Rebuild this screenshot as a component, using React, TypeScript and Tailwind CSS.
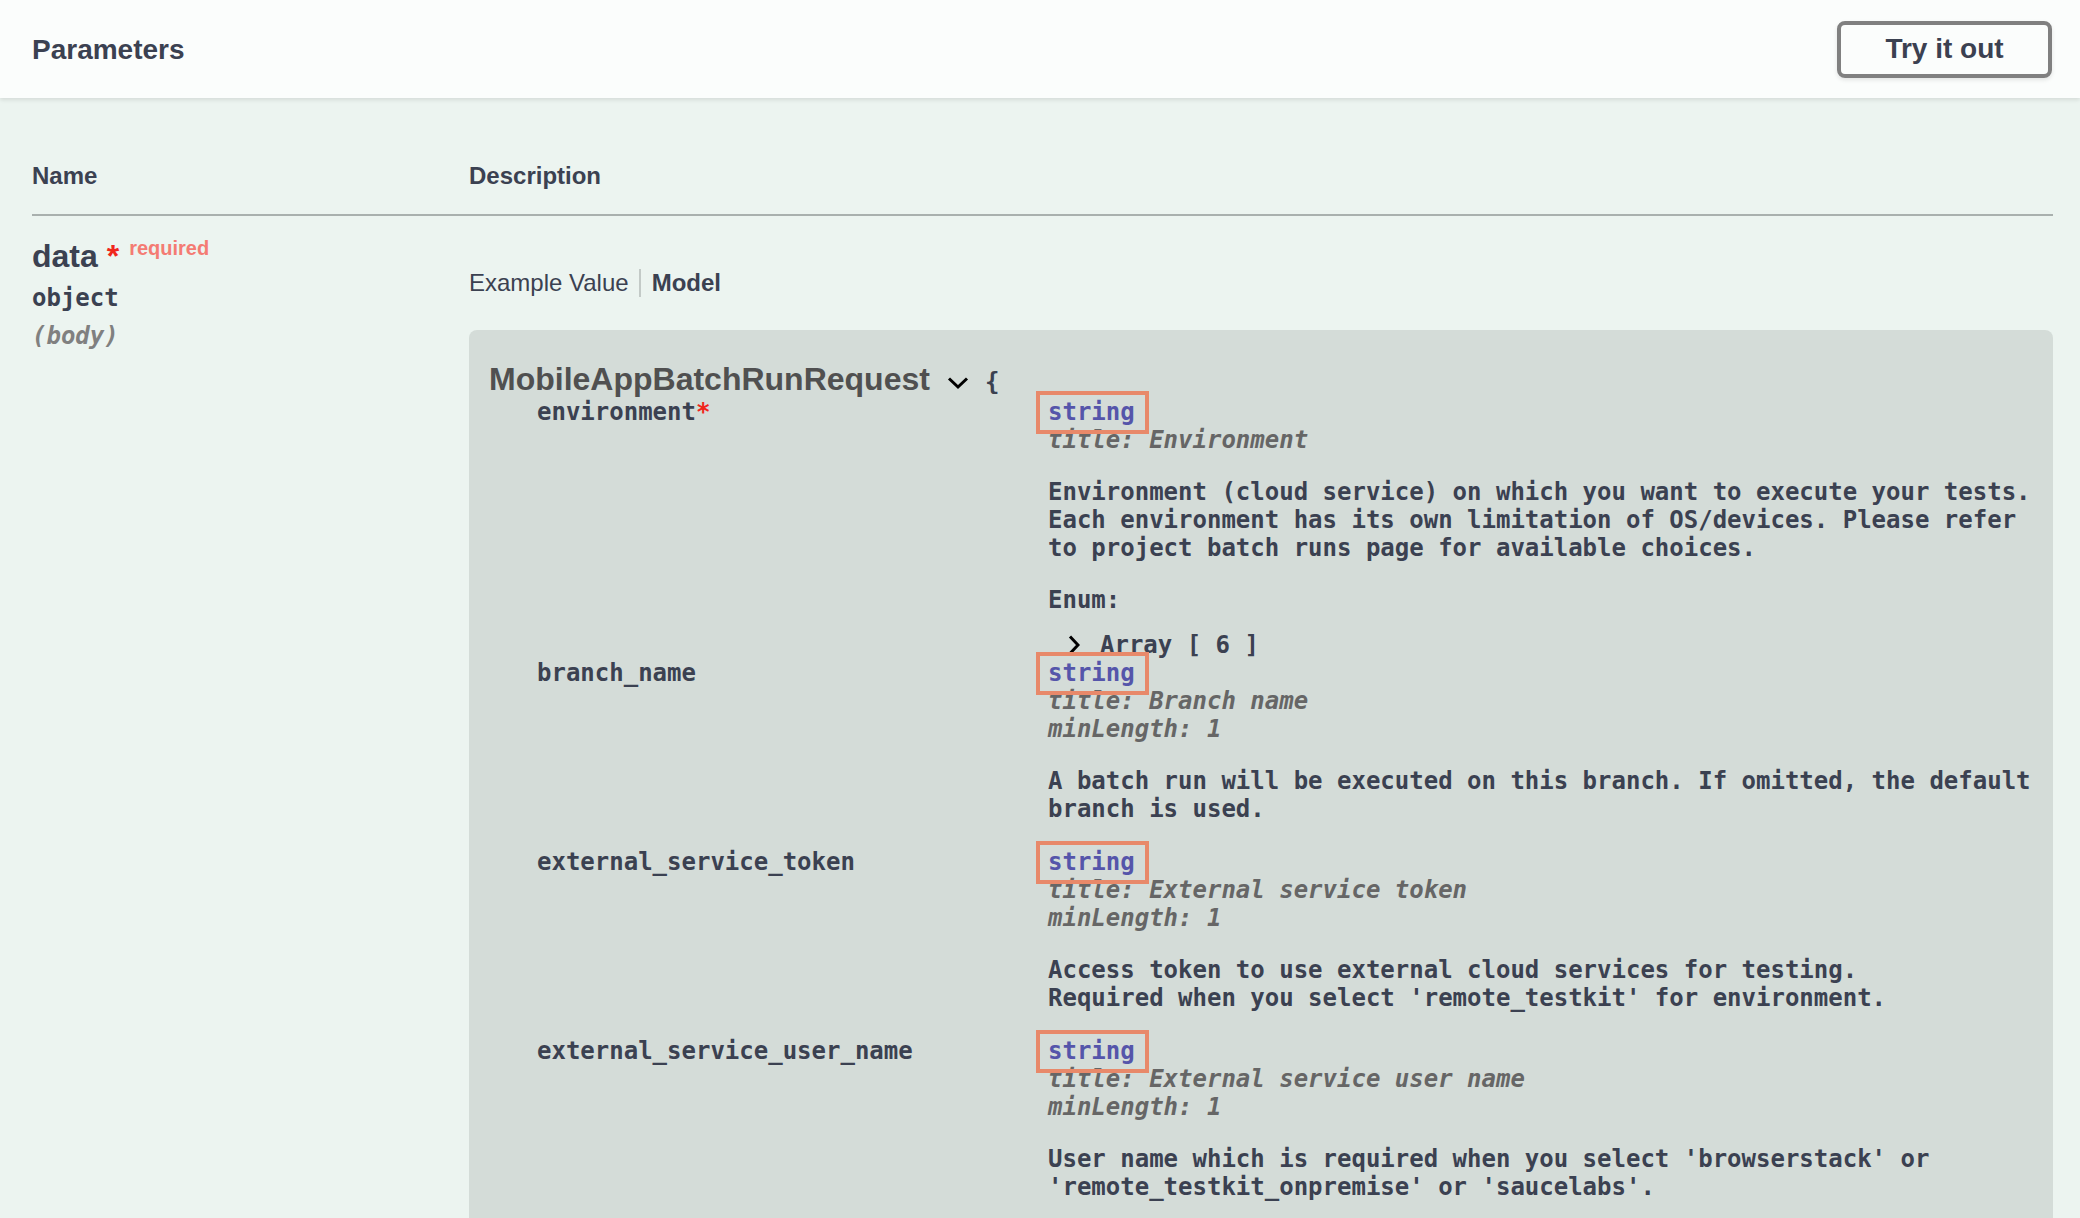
import React from "react";

const mono = "font-['DejaVu_Sans_Mono',monospace] font-bold";

function TypeTag({ children }: { children: React.ReactNode }) {
  return (
    <div className="h-[28px] leading-[28px]">
      <span className="relative inline-block text-[#55a]">
        {children}
        <span className="absolute left-[-12px] right-[-14px] top-[-7px] bottom-[-8px] border-4 border-[#e8896a]" />
      </span>
    </div>
  );
}

function Line({ children, className = "" }: { children: React.ReactNode; className?: string }) {
  return <div className={`h-[28px] leading-[28px] whitespace-pre ${className}`}>{children}</div>;
}

function Row({
  name,
  required,
  children,
}: {
  name: string;
  required?: boolean;
  children: React.ReactNode;
}) {
  return (
    <div className="flex">
      <div className="w-[559px] shrink-0 pl-[48px] h-[28px] leading-[28px] text-[#3b4151]">
        {name}
        {required && <span className="text-[#f0261c]">*</span>}
      </div>
      <div className="flex-1 text-[#3b4151]">{children}</div>
    </div>
  );
}

export default function App() {
  return (
    <div className="w-[2080px] h-[1218px] overflow-hidden bg-[#ecf4f0] font-['Liberation_Sans',Arial,sans-serif] text-[#3b4151]">
      <header className="relative z-10 h-[98px] bg-[#fbfdfc] shadow-[0_2px_4px_rgba(0,0,0,0.1)] flex items-center justify-between pl-[32px] pr-[28px]">
        <h4 className="text-[28px] font-bold leading-[34px] pt-[2px]">Parameters</h4>
        <button className="w-[215px] h-[57px] border-4 border-[#808080] rounded-[8px] bg-transparent text-[28px] font-bold text-[#3b4151] shadow-[0_2px_4px_rgba(0,0,0,0.1)] font-['Liberation_Sans',Arial,sans-serif]">
          Try it out
        </button>
      </header>

      <div className="pt-[64px] pl-[32px] pr-[27px]">
        <div className="flex h-[28px] leading-[28px] text-[24px] font-bold">
          <div className="w-[437px]">Name</div>
          <div>Description</div>
        </div>
        <div className="mt-[24px] h-[2px] bg-[#a9b0ae]" />

        <div className="flex">
          <div className="w-[437px] shrink-0 pt-[20px]">
            <div className="h-[40px] leading-[40px] text-[32px] font-bold whitespace-nowrap">
              data{"\u00a0"}
              <span className="text-[#f0261c]">*</span>
              <span className="relative top-[-12px] px-[10px] text-[20px] font-bold text-[#f47b73]">required</span>
            </div>
            <div className={`mt-[8px] h-[28px] leading-[28px] text-[24px] ${mono}`}>object</div>
            <div className={`mt-[10px] h-[28px] leading-[28px] text-[24px] italic text-[#808080] ${mono}`}>(body)</div>
          </div>

          <div className="flex-1 pt-[53px]">
            <div className="flex h-[28px] leading-[28px] text-[24px]">
              <div className="pr-[10px] border-r-2 border-[#c3cac7]">Example Value</div>
              <div className="pl-[11px] font-bold">Model</div>
            </div>

            <div className="mt-[33px] h-[1000px] rounded-[8px] bg-[#d4dcd8] pl-[20px] pt-[32px]">
              <div className="flex items-baseline h-[34px] leading-[34px]">
                <span className="text-[32px] font-bold text-[#505050]">MobileAppBatchRunRequest</span>
                <svg className="ml-[17px]" width="22" height="14" viewBox="0 0 22 14">
                  <path d="M2 2.5 L11 11 L20 2.5" fill="none" stroke="#000" strokeWidth="3" />
                </svg>
                <span className={`ml-[16px] text-[24px] text-[#3b4151] ${mono}`}>{"{"}</span>
              </div>

              <div className={`mt-[2px] text-[24px] ${mono}`}>
                <Row name="environment" required>
                  <TypeTag>string</TypeTag>
                  <Line className="italic text-[#666]">title: Environment</Line>
                  <div className="mt-[24px]">
                    <Line>Environment (cloud service) on which you want to execute your tests.</Line>
                    <Line>Each environment has its own limitation of OS/devices. Please refer</Line>
                    <Line>to project batch runs page for available choices.</Line>
                  </div>
                  <Line className="mt-[24px]">Enum:</Line>
                  <div className="mt-[17px] h-[28px] leading-[28px] flex items-center">
                    <svg className="ml-[20px]" width="12" height="20" viewBox="0 0 12 20">
                      <path d="M2 1.5 L10 10 L2 18.5" fill="none" stroke="#000" strokeWidth="3" />
                    </svg>
                    <span className="ml-[20px]">Array [ 6 ]</span>
                  </div>
                </Row>

                <Row name="branch_name">
                  <TypeTag>string</TypeTag>
                  <Line className="italic text-[#666]">title: Branch name</Line>
                  <Line className="italic text-[#666]">minLength: 1</Line>
                  <div className="mt-[24px] mb-[25px]">
                    <Line>A batch run will be executed on this branch. If omitted, the default</Line>
                    <Line>branch is used.</Line>
                  </div>
                </Row>

                <Row name="external_service_token">
                  <TypeTag>string</TypeTag>
                  <Line className="italic text-[#666]">title: External service token</Line>
                  <Line className="italic text-[#666]">minLength: 1</Line>
                  <div className="mt-[24px] mb-[25px]">
                    <Line>Access token to use external cloud services for testing.</Line>
                    <Line>Required when you select 'remote_testkit' for environment.</Line>
                  </div>
                </Row>

                <Row name="external_service_user_name">
                  <TypeTag>string</TypeTag>
                  <Line className="italic text-[#666]">title: External service user name</Line>
                  <Line className="italic text-[#666]">minLength: 1</Line>
                  <div className="mt-[24px] mb-[24px]">
                    <Line>User name which is required when you select 'browserstack' or</Line>
                    <Line>'remote_testkit_onpremise' or 'saucelabs'.</Line>
                  </div>
                </Row>
              </div>
            </div>
          </div>
        </div>
      </div>
    </div>
  );
}
